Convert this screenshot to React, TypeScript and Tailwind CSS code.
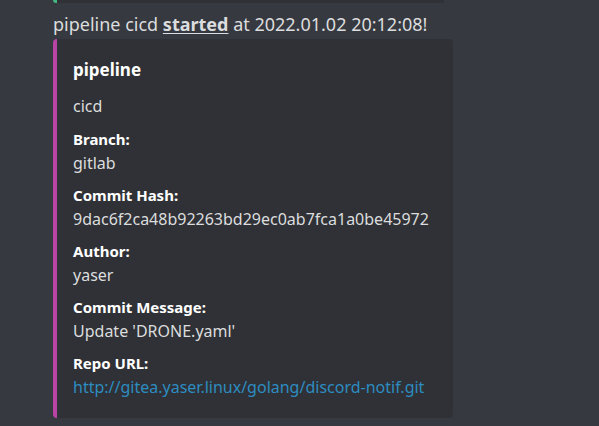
import React from 'react'

// Discord-style webhook message with embed fields

const fields = [
  { name: 'Branch:', value: 'gitlab' },
  { name: 'Commit Hash:', value: '9dac6f2ca48b92263bd29ec0ab7fca1a0be45972' },
  { name: 'Author:', value: 'yaser' },
  { name: 'Commit Message:', value: "Update 'DRONE.yaml'" },
]

export default function App() {
  return (
    <div
      className="h-[426px] w-[599px] overflow-hidden bg-[#36393f] pl-[53px] text-[#dcddde]"
      style={{ fontFamily: '"Noto Sans", "Open Sans", sans-serif' }}
    >
      {/* tail of the previous embed */}
      <div className="h-[3px] w-[391px] rounded-b-[4px] border-l-4 border-[#43b581] bg-[#2f3136]" />

      <div className="mt-[10px] text-[18px] leading-[22px]">
        pipeline cicd <span className="font-bold underline underline-offset-2">started</span> at 2022.01.02 20:12:08!
      </div>

      <div className="mt-[4px] w-[400px] rounded-[4px] border-l-4 border-[#b845a4] bg-[#2f3136] pb-[21px] pl-[16px] pr-[16px] pt-[20px]">
        <div className="text-[17px] font-bold leading-[22px] text-white">pipeline</div>
        <div className="mt-[15px] text-[16px] leading-[20px]">cicd</div>

        <div className="mt-[13px] flex flex-col gap-[12px]">
          {fields.map((f) => (
            <div key={f.name}>
              <div className="text-[15px] font-bold leading-[20px] text-white">{f.name}</div>
              <div className="mt-[4px] text-[16px] leading-[20px]">{f.value}</div>
            </div>
          ))}
          <div>
            <div className="text-[15px] font-bold leading-[20px] text-white">Repo URL:</div>
            <a className="mt-[4px] block text-[16px] leading-[20px] text-[#2d8cc0]" href="#">
              http://gitea.yaser.linux/golang/discord-notif.git
            </a>
          </div>
        </div>
      </div>
    </div>
  )
}
